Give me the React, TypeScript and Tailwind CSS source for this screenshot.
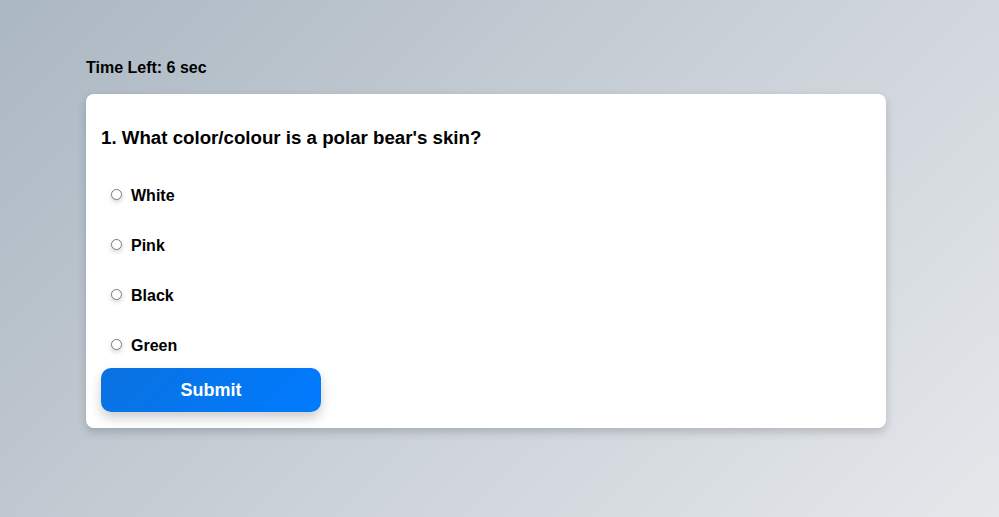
import React, { useState } from "react";

const options = ["White", "Pink", "Black", "Green"];

const App: React.FC = () => {
    const [selected, setSelected] = useState<string | null>(null);

    return (
        <div className="w-full min-h-[517px] bg-[linear-gradient(135deg,#abb7c2_0%,#c9d0d7_50%,#e5e8eb_100%)] font-['Liberation_Sans',Arial,sans-serif] text-black">
            <div className="pl-[86px] pt-[56px]">
                <div className="text-base font-bold leading-6">Time Left: 6 sec</div>
                <div className="mt-[14px] w-[800px] bg-white rounded-lg shadow-[0_4px_10px_rgba(0,0,0,0.18)] p-[15px] pb-[16px] flex flex-col">
                    <h2 className="mt-[15px] text-[18.7px] leading-[28px] font-bold">1. What color/colour is a polar bear's skin?</h2>
                    <div className="mt-[32px] flex flex-col gap-[26px]">
                        {options.map((opt) => (
                            <label key={opt} className="flex items-center h-6 pl-[10px] cursor-pointer">
                                <input
                                    type="radio"
                                    name="answer"
                                    checked={selected === opt}
                                    onChange={() => setSelected(opt)}
                                    className="appearance-none m-0 mb-[4px] w-[11px] h-[11px] rounded-full border border-[#7a7a7a] bg-white shadow-[0_2px_5px_rgba(0,0,0,0.18)] checked:bg-[#007bff]"
                                />
                                <span className="ml-[9px] text-base font-bold">{opt}</span>
                            </label>
                        ))}
                    </div>
                    <button className="mt-[10px] w-[220px] h-[44px] rounded-[10px] bg-[linear-gradient(135deg,#0a72e0,#007bff)] text-white text-[18px] font-bold shadow-[0_6px_12px_rgba(0,0,0,0.2)]">
                        Submit
                    </button>
                </div>
            </div>
        </div>
    );
};

export default App;
